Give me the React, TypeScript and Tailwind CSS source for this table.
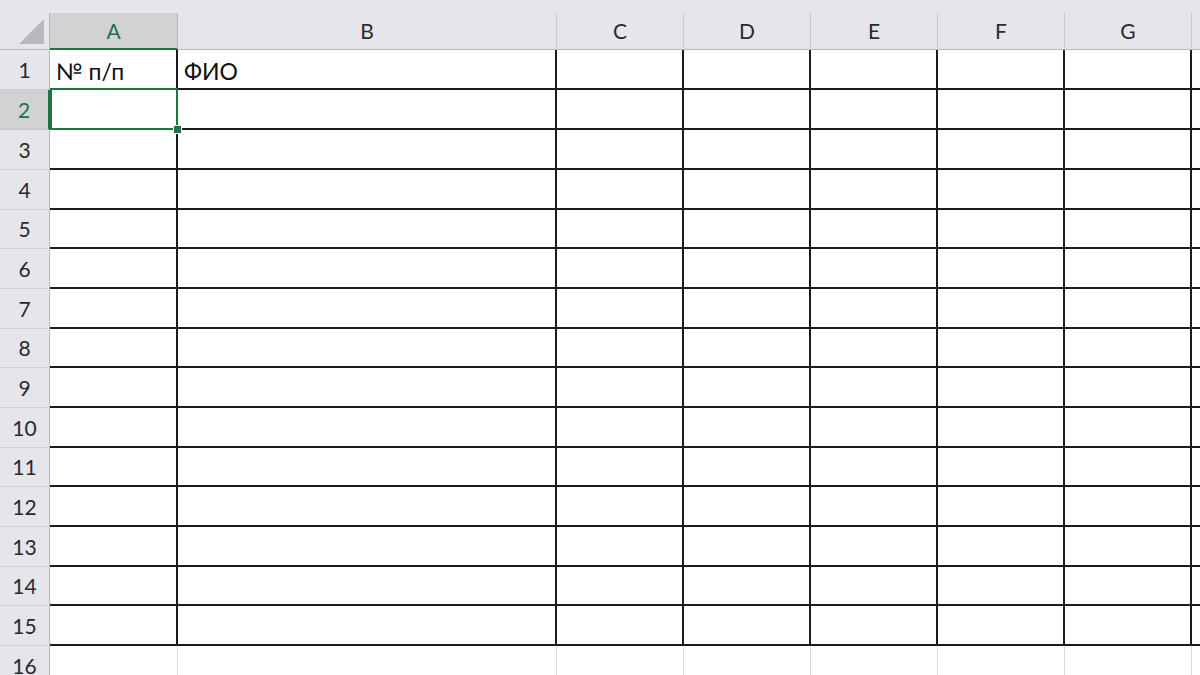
import React from "react";

const cols = [
  { name: "A", w: 128 },
  { name: "B", w: 379 },
  { name: "C", w: 127 },
  { name: "D", w: 127 },
  { name: "E", w: 127 },
  { name: "F", w: 127 },
  { name: "G", w: 127 },
  { name: "H", w: 127 },
];

const rowHeights = [40, 40, 40, 40, 39, 40, 40, 39, 40, 40, 39, 40, 40, 39, 40];

const font = { fontFamily: "Lato, 'Liberation Sans', sans-serif" };

export default function App() {
  return (
    <div
      className="w-[1200px] h-[675px] overflow-hidden bg-white relative text-[#2a2a2a]"
      style={font}
    >
      {/* top strip */}
      <div className="h-[13px] bg-[#e6e6ea]" />
      {/* column header row */}
      <div className="flex h-[37px]">
        <div className="w-[50px] shrink-0 bg-[#e6e6ea] border-r border-b border-[#b8b8bc] relative flex items-end justify-end pr-[5px] pb-[5px]">
          <svg width="25" height="25" viewBox="0 0 25 25">
            <polygon points="25,0 25,25 0,25" fill="#b9b9bb" />
          </svg>
        </div>
        {cols.map((c, i) => (
          <div
            key={c.name}
            style={{ width: c.w }}
            className={
              i === 0
                ? "shrink-0 bg-[#d2d2d4] border-r border-[#b8b8bc] border-b-2 border-b-[#217346] flex items-center justify-center text-[21px] text-[#217346]"
                : "shrink-0 bg-[#e6e6ea] border-r border-[#c8c8cc] border-b border-b-[#b8b8bc] flex items-center justify-center text-[21px]"
            }
          >
            {c.name}
          </div>
        ))}
      </div>
      {/* rows */}
      {rowHeights.map((h, r) => (
        <div key={r} className="flex" style={{ height: h }}>
          <div
            className={
              r === 1
                ? "w-[50px] shrink-0 bg-[#d2d2d4] border-r-2 border-[#217346] border-b border-b-[#c8c8cc] flex items-center justify-center text-[21px] text-[#217346]"
                : "w-[50px] shrink-0 bg-[#e6e6ea] border-r border-[#b8b8bc] border-b border-b-[#d0d0d4] flex items-center justify-center text-[21px]"
            }
          >
            {r + 1}
          </div>
          {cols.map((c, i) => (
            <div
              key={c.name}
              style={{ width: c.w }}
              className="shrink-0 relative border-r-2 border-b-2 border-[#1c1c1c] flex items-end pl-[6px] pb-[5px] text-[23px] leading-none text-[#111]"
            >
              {r === 0 && i === 0 && <span>№ п/п</span>}
              {r === 0 && i === 1 && <span>ФИО</span>}
              {r === 1 && i === 0 && (
                <div className="absolute z-10 -top-[2px] left-0 -right-[2px] -bottom-[2px] border-2 border-[#217346]">
                  <div className="absolute -right-[6px] -bottom-[6px] w-[9px] h-[9px] bg-[#217346] border border-white" />
                </div>
              )}
            </div>
          ))}
        </div>
      ))}
      {/* row 16 */}
      <div className="flex h-[40px]">
        <div className="w-[50px] shrink-0 bg-[#e6e6ea] border-r border-[#b8b8bc] flex items-center justify-center text-[21px]">
          16
        </div>
        {cols.map((c) => (
          <div
            key={c.name}
            style={{ width: c.w }}
            className="shrink-0 border-r border-[#dadade]"
          />
        ))}
      </div>
    </div>
  );
}
